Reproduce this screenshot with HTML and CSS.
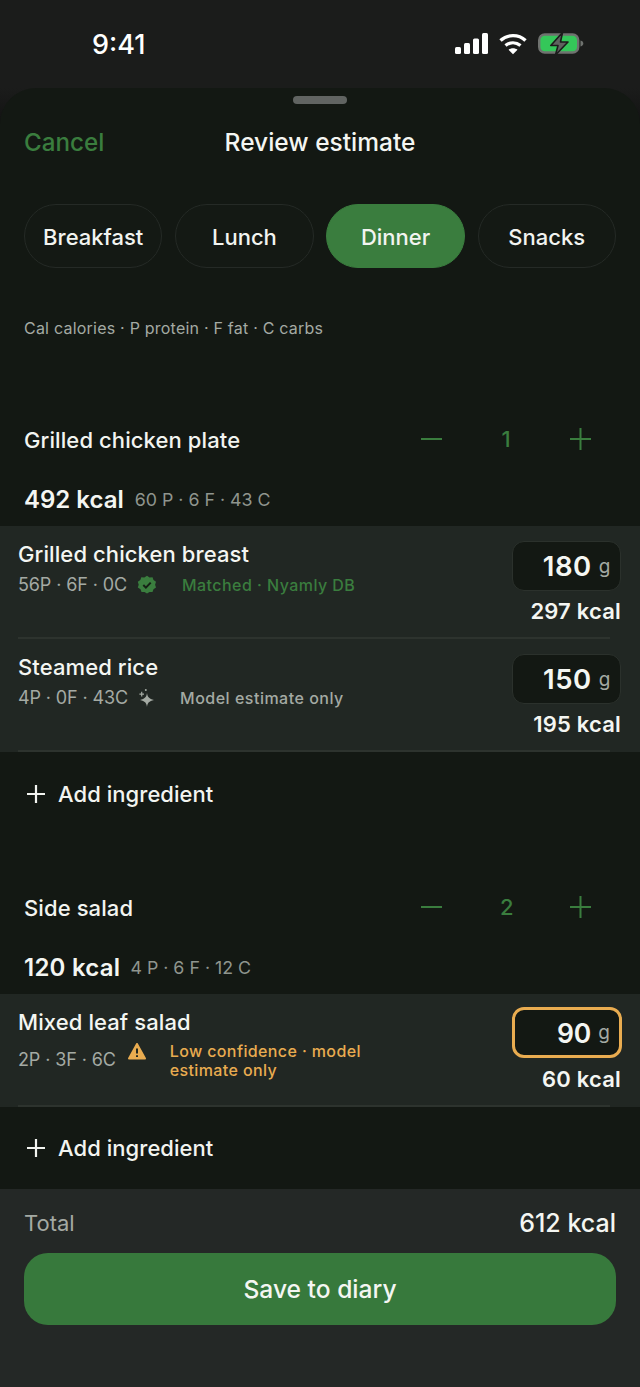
FILE: index.html
```html
<!DOCTYPE html>
<html lang="en">
<head>
<meta charset="utf-8">
<title>Review estimate</title>
<link rel="stylesheet" href="styles.css">
</head>
<body>
<div class="phone">
  <header class="status">
    <span class="time">9:41</span>
    <div class="status-icons">
      <svg width="34" height="22" viewBox="0 0 34 22"><g fill="#fff"><rect x="0" y="14" width="6" height="7" rx="1.5"/><rect x="9" y="10" width="6" height="11" rx="1.5"/><rect x="18" y="5.500" width="6" height="15.500" rx="1.500"/><rect x="27" y="0" width="6" height="21" rx="1.500"/></g></svg>
      <svg width="28" height="22" viewBox="0 0 28 22"><g fill="none" stroke="#fff" stroke-width="3.400"><path d="M1.500 7.500C8.500 1 19.500 1 26.500 7.500"/><path d="M6.500 12.500C11 9 17 9 21.500 12.500"/></g><path d="M9.500 16.800C12 14.800 16 14.800 18.500 16.800L14 21.200Z" fill="#fff"/></svg>
      <svg width="46" height="24" viewBox="0 0 46 24"><rect x="1.200" y="2.500" width="39" height="18" rx="5.500" fill="#34c759" stroke="#6f726f" stroke-width="2.400"/><path d="M42.500 8.500c2 .4 2.800 1.600 2.800 3s-.8 2.600-2.800 3z" fill="#6f726f"/><path d="M24.500 0.500 12.800 13.500H20L17.500 23 30 10H22.500Z" fill="#5f625f" stroke="#1b1c1b" stroke-width="1.600" stroke-linejoin="round"/></svg>
    </div>
  </header>
  <main class="sheet">
    <div class="grabber"></div>
    <div class="nav">
      <span class="cancel">Cancel</span>
      <span class="nav-title">Review estimate</span>
    </div>
    <div class="chips">
      <span class="chip">Breakfast</span>
      <span class="chip">Lunch</span>
      <span class="chip chip-active">Dinner</span>
      <span class="chip">Snacks</span>
    </div>
    <p class="legend">Cal calories · P protein · F fat · C carbs</p>

    <section class="meal meal-first">
      <div class="meal-head">
        <h2 class="meal-name">Grilled chicken plate</h2>
        <div class="stepper">
          <svg class="step-icon" width="21" height="22" viewBox="0 0 21 22"><path d="M0 11H21" stroke="#3a7d3e" stroke-width="2"/></svg>
          <span class="step-count">1</span>
          <svg class="step-icon" width="21" height="22" viewBox="0 0 21 22"><path d="M0 11H21M10.500 0V22" stroke="#3a7d3e" stroke-width="2"/></svg>
        </div>
      </div>
      <div class="meal-sum"><span class="meal-kcal">492 kcal</span><span class="meal-macros">60 P · 6 F · 43 C</span></div>
      <div class="items">
        <div class="item">
          <div class="item-main">
            <div class="item-name">Grilled chicken breast</div>
            <div class="item-meta">
              <span class="macros">56P · 6F · 0C</span>
              <svg class="badge" width="20" height="20" viewBox="0 0 20 20"><path d="M10 .8l2.500 1.700 3-.2 1 2.800 2.500 1.700-.9 2.900.9 2.900-2.500 1.700-1 2.800-3-.2-2.500 1.700-2.500-1.700-3 .2-1-2.800L.8 12.600l.9-2.900-.9-2.900 2.500-1.700 1-2.800 3 .2z" fill="#3a7d3e"/><path d="M6.300 10l2.600 2.600 4.800-5" fill="none" stroke="#152015" stroke-width="2"/></svg>
              <span class="note note-green">Matched · Nyamly DB</span>
            </div>
          </div>
          <div class="item-side">
            <div class="qty"><span class="qty-num">180</span><span class="qty-unit">g</span></div>
            <div class="item-kcal">297 kcal</div>
          </div>
        </div>
        <div class="item">
          <div class="item-main">
            <div class="item-name">Steamed rice</div>
            <div class="item-meta">
              <span class="macros">4P · 0F · 43C</span>
              <svg class="badge" width="20" height="20" viewBox="0 0 20 20" fill="#a4aaa3"><path d="M9 5c.6 4.200 2 5.800 7 7-5 1.200-6.400 2.800-7 7-.6-4.200-2-5.800-7-7 5-1.200 6.400-2.800 7-7z"/><path d="M3.100 3.800h1.200v1.700H6v1.200H4.300v1.700H3.100V6.700H1.400V5.500h1.700z"/><circle cx="7.800" cy="2" r="1"/></svg>
              <span class="note note-grey">Model estimate only</span>
            </div>
          </div>
          <div class="item-side">
            <div class="qty"><span class="qty-num">150</span><span class="qty-unit">g</span></div>
            <div class="item-kcal">195 kcal</div>
          </div>
        </div>
      </div>
      <div class="add">
        <svg width="20" height="20" viewBox="0 0 20 20"><path d="M1 10H19M10 1V19" stroke="#f2f4f0" stroke-width="2.200"/></svg>
        <span>Add ingredient</span>
      </div>
    </section>

    <section class="meal meal-second">
      <div class="meal-head">
        <h2 class="meal-name">Side salad</h2>
        <div class="stepper">
          <svg class="step-icon" width="21" height="22" viewBox="0 0 21 22"><path d="M0 11H21" stroke="#3a7d3e" stroke-width="2"/></svg>
          <span class="step-count">2</span>
          <svg class="step-icon" width="21" height="22" viewBox="0 0 21 22"><path d="M0 11H21M10.500 0V22" stroke="#3a7d3e" stroke-width="2"/></svg>
        </div>
      </div>
      <div class="meal-sum meal-sum-tight"><span class="meal-kcal">120 kcal</span><span class="meal-macros">4 P · 6 F · 12 C</span></div>
      <div class="items">
        <div class="item">
          <div class="item-main">
            <div class="item-name">Mixed leaf salad</div>
            <div class="item-meta item-meta-warn">
              <span class="macros macros-low">2P · 3F · 6C</span>
              <svg class="badge badge-warn" width="18" height="17" viewBox="0 0 18 17"><path d="M9 1 17 15.500H1Z" fill="#e9ac50" stroke="#e9ac50" stroke-width="2" stroke-linejoin="round"/><path d="M9 5.500V10.500M9 12.300V14" stroke="#20261f" stroke-width="2"/></svg>
              <span class="note note-amber">Low confidence · model<br>estimate only</span>
            </div>
          </div>
          <div class="item-side">
            <div class="qty qty-warn"><span class="qty-num">90</span><span class="qty-unit">g</span></div>
            <div class="item-kcal item-kcal-warn">60 kcal</div>
          </div>
        </div>
      </div>
      <div class="add add-last">
        <svg width="20" height="20" viewBox="0 0 20 20"><path d="M1 10H19M10 1V19" stroke="#f2f4f0" stroke-width="2.200"/></svg>
        <span>Add ingredient</span>
      </div>
    </section>
  </main>
  <footer class="footer">
    <div class="total"><span class="total-label">Total</span><span class="total-value">612 kcal</span></div>
    <button class="save" type="button">Save to diary</button>
  </footer>
</div>
</body>
</html>
```
FILE: styles.css
```css
* { box-sizing: border-box; }
html, body { margin: 0; padding: 0; }
body {
  background: #1b1c1b;
  font-family: Inter, "Liberation Sans", sans-serif;
  color: #f2f4f0;
}
.phone {
  width: 640px;
  height: 1387px;
  display: flex;
  flex-direction: column;
  overflow: hidden;
  background: linear-gradient(#1b1c1b, #1b1c1b 88px, #111 130px);
}
.status {
  height: 88px;
  flex: none;
  display: flex;
  align-items: center;
  justify-content: space-between;
  padding: 0 56.500px 0 92px;
}
.time {
  font-size: 27px;
  font-weight: 500;
  color: #fff;
}
.status-icons {
  display: flex;
  align-items: center;
  gap: 10.500px;
}
.sheet {
  flex: none;
  height: 1101px;
  overflow: hidden;
  background: #131813;
  border-radius: 36px 36px 0 0;
  padding-top: 8px;
}
.grabber {
  width: 54px;
  height: 8px;
  border-radius: 4px;
  background: #616462;
  margin: 0 auto;
}
.nav {
  display: flex;
  justify-content: center;
  position: relative;
  height: 30px;
  margin-top: 23px;
  align-items: center;
}
.cancel {
  position: absolute;
  left: 24px;
  font-size: 24.200px;
  font-weight: 500;
  color: #3a7d3e;
}
.nav-title {
  font-size: 24.500px;
  font-weight: 500;
  color: #f4f6f2;
}
.chips {
  display: flex;
  gap: 12.700px;
  padding: 0 24px;
  margin-top: 47px;
}
.chip {
  flex: 1;
  height: 64px;
  padding-top: 1px;
  border-radius: 32px;
  border: 1.500px solid #252a26;
  display: flex;
  align-items: center;
  justify-content: center;
  font-size: 22px;
  font-weight: 500;
  color: #f2f4f0;
  background: #141914;
}
.chip-active {
  background: #3a7d3e;
  border-color: #3a7d3e;
}
.legend {
  margin: 50px 0 0 24px;
  font-size: 16px;
  line-height: 20px;
  letter-spacing: .22px;
  color: #a4aaa3;
}
.meal-first { margin-top: 86px; }
.meal-second { margin-top: 0; }
.meal-head {
  display: flex;
  align-items: center;
  justify-content: space-between;
  height: 30px;
  padding: 0 49px 0 24px;
}
.meal-name {
  margin: 0;
  padding-top: 2px;
  font-size: 22px;
  font-weight: 500;
  letter-spacing: .1px;
  color: #f2f4f0;
}
.stepper {
  display: flex;
  align-items: center;
  gap: 58px;
}
.step-count {
  font-size: 22px;
  font-weight: 500;
  color: #3a7d3e;
  width: 12px;
  text-align: center;
}
.meal-sum {
  display: flex;
  align-items: center;
  align-content: flex-start;
  flex-wrap: wrap;
  gap: 11px;
  padding: 31px 24px 0;
  height: 72px;
}
.meal-sum-tight { gap: 10px; }
.meal-sum-tight .meal-kcal { letter-spacing: .25px; }
.meal-kcal {
  font-size: 24px;
  font-weight: 600;
  color: #f4f6f2;
}
.meal-macros {
  font-size: 17.800px;
  color: #8f958e;
}
.items { background: #212723; }
.item {
  display: flex;
  justify-content: space-between;
  height: 113px;
  padding: 15px 19px 0 18px;
  position: relative;
}
.item::after {
  content: "";
  position: absolute;
  left: 18px;
  right: 30px;
  bottom: 0;
  height: 2px;
  background: #2d332e;
}
.item-name {
  margin-top: -1px;
  font-size: 22px;
  font-weight: 500;
  line-height: 28px;
  letter-spacing: .1px;
  color: #f4f6f2;
}
.item-meta {
  display: flex;
  align-items: center;
  margin-top: 6px;
}
.item-meta-warn { align-items: flex-start; }
.macros {
  font-size: 18px;
  letter-spacing: -.12px;
  color: #a4aaa3;
}
.macros-low { margin-top: 7px; }
.badge { margin-left: 10px; }
.badge-warn { margin: 1px 0 0 12px; }
.note {
  font-size: 16px;
  font-weight: 500;
  line-height: 20px;
  margin-left: 25px;
  letter-spacing: .45px;
}
.note-green { color: #3a7d3e; }
.note-grey { color: #a4aaa3; margin-left: 22px; letter-spacing: .5px; }
.note-amber { color: #e9ac50; margin-left: 24px; line-height: 19px; letter-spacing: .38px; }
.item-side {
  display: flex;
  flex-direction: column;
  align-items: flex-end;
}
.qty {
  width: 109px;
  height: 50px;
  border-radius: 12px;
  border: 1.500px solid #2b312c;
  background: #131813;
  display: flex;
  align-items: center;
  justify-content: flex-end;
  gap: 7px;
  padding-right: 9.500px;
}
.qty-warn {
  width: 110px;
  margin-right: -1px;
  border: 3px solid #e9ac50;
  height: 51px;
  margin-top: -2px;
  padding-right: 9px;
}
.qty-num {
  font-size: 27.500px;
  font-weight: 600;
  letter-spacing: .6px;
  color: #f4f6f2;
}
.qty-warn .qty-num {
  font-size: 26.500px;
  letter-spacing: 0;
}
.qty-unit {
  font-size: 19px;
  color: #a4aaa3;
}
.item-kcal {
  margin-top: 6px;
  font-size: 22px;
  font-weight: 600;
  line-height: 28px;
  letter-spacing: .2px;
  color: #f4f6f2;
}
.item-kcal-warn { margin-top: 7px; }
.add {
  display: flex;
  align-items: center;
  gap: 12px;
  height: 84px;
  padding: 0 26px;
  font-size: 22px;
  font-weight: 500;
  letter-spacing: .05px;
  color: #f2f4f0;
}
.add { margin-bottom: 56px; }
.add-last { margin-bottom: 0; height: 82px; }
.footer {
  height: 198px;
  flex: none;
  background: #242826;
  padding: 17px 24px 0;
}
.total {
  display: flex;
  justify-content: space-between;
  align-items: center;
  height: 34px;
}
.total-label {
  font-size: 22px;
  color: #a4aaa3;
}
.total-value {
  font-size: 25px;
  font-weight: 500;
  color: #f4f6f2;
}
.save {
  display: block;
  width: 100%;
  height: 72px;
  margin-top: 13px;
  border: 0;
  border-radius: 24px;
  background: #37793c;
  color: #f4f6f2;
  font-family: inherit;
  font-size: 24.600px;
  font-weight: 500;
}
```
